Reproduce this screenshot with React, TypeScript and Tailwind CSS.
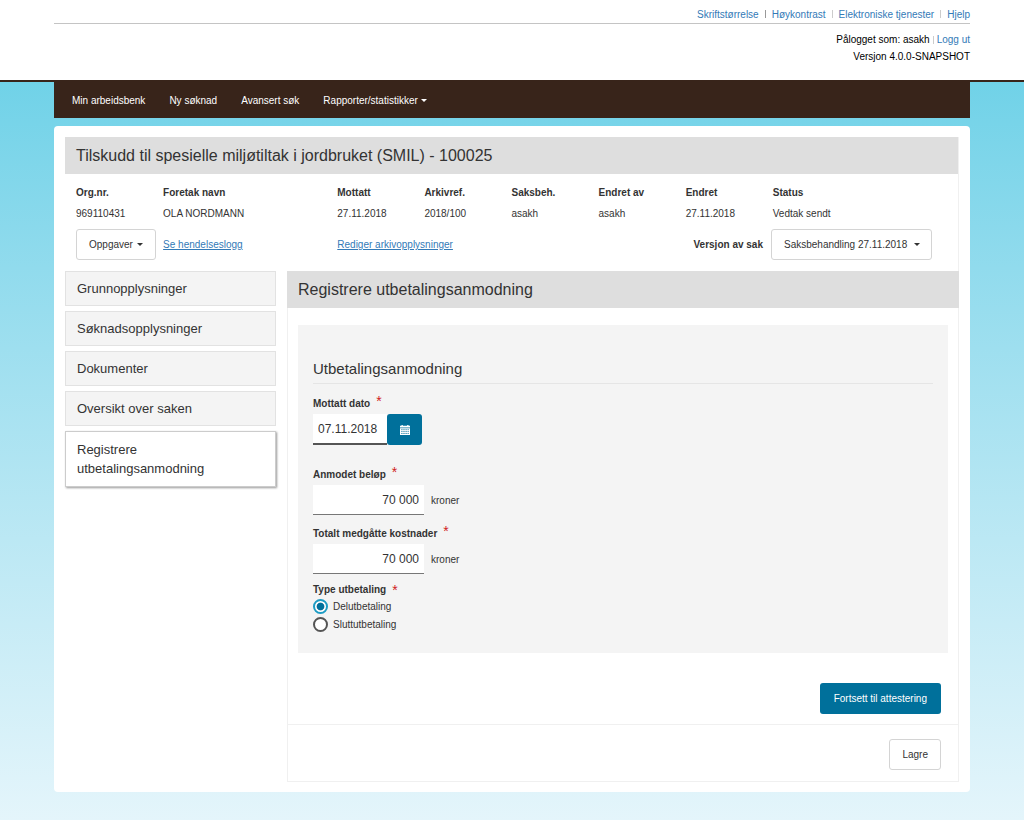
import { useState } from "react";

const navItems = ["Min arbeidsbenk", "Ny søknad", "Avansert søk"];

const sakInfo = [
  { label: "Org.nr.", value: "969110431", span: 1 },
  { label: "Foretak navn", value: "OLA NORDMANN", span: 2 },
  { label: "Mottatt", value: "27.11.2018", span: 1 },
  { label: "Arkivref.", value: "2018/100", span: 1 },
  { label: "Saksbeh.", value: "asakh", span: 1 },
  { label: "Endret av", value: "asakh", span: 1 },
  { label: "Endret", value: "27.11.2018", span: 1 },
  { label: "Status", value: "Vedtak sendt", span: 2 },
];

const menuItems = ["Grunnopplysninger", "Søknadsopplysninger", "Dokumenter", "Oversikt over saken"];

function Caret({ className = "" }: { className?: string }) {
  return (
    <svg viewBox="0 0 6 3" className={`h-[3px] w-[6px] ${className}`} fill="currentColor" aria-hidden="true">
      <path d="M0 0h6L3 3z" />
    </svg>
  );
}

function CalendarIcon() {
  return (
    <svg viewBox="0 0 10 10" className="size-[10px]" aria-hidden="true">
      <path fill="#fff" d="M0 .8h1.5V0h1.3v.8h4.4V0h1.3v.8H10v1.7H0zM0 3.2h10V10H0z" />
      <path
        stroke="#00709b"
        strokeWidth="0.9"
        strokeDasharray="1.2 0.9"
        d="M1.3 4.7h7.4M1.3 6.6h7.4M1.3 8.5h7.4"
      />
    </svg>
  );
}

function Required() {
  return <span className="ml-1.5 self-start text-sm leading-4 font-normal text-[#d0201c]">*</span>;
}

function AmountField({ id, label }: { id: string; label: string }) {
  return (
    <div className="mb-2">
      <label htmlFor={id} className="flex h-[21px] items-center font-bold">
        {label} <Required />
      </label>
      <div className="flex items-center gap-[7px]">
        <input
          id={id}
          defaultValue="70 000"
          className="h-[30px] w-[111px] border-b border-[#777] bg-white px-[5px] text-right text-xs"
        />
        <span>kroner</span>
      </div>
    </div>
  );
}

function Radio({ label, checked, onChange }: { label: string; checked: boolean; onChange: () => void }) {
  return (
    <label className="flex h-[18px] items-center gap-[5px]">
      <input
        type="radio"
        name="type"
        checked={checked}
        onChange={onChange}
        className="size-[15px] appearance-none rounded-full border-2 border-[#555] bg-white checked:border-[#1d9cc4] checked:bg-radial checked:from-[#00709b] checked:from-45% checked:to-white checked:to-55%"
      />
      {label}
    </label>
  );
}

export default function App() {
  const [type, setType] = useState("Delutbetaling");

  return (
    <div className="flex min-h-screen flex-col bg-white font-['Liberation_Sans',Arial,sans-serif] text-[10px] text-[#333]">
      <header className="h-20 px-4">
        <div className="mx-auto max-w-[916px] text-right text-black">
          <nav className="flex h-6 items-center justify-end gap-[6px] border-b border-[#c4c4c4] pt-[5px] text-[#337ab7]">
            <a href="#skrift">Skriftstørrelse</a>
            <span className="h-2 w-px bg-[#999]" />
            <a href="#kontrast">Høykontrast</a>
            <span className="h-2 w-px bg-[#ccc]" />
            <a href="#tjenester">Elektroniske tjenester</a>
            <span className="h-2 w-px bg-[#ccc]" />
            <a href="#hjelp">Hjelp</a>
          </nav>
          <div className="pt-[7px] leading-[17px]">
            <p className="flex items-center justify-end gap-[3px]">
              Pålogget som: asakh <span className="h-2 w-px bg-[#ccc]" />
              <a href="#loggut" className="text-[#337ab7]">Logg ut</a>
            </p>
            <p>Versjon 4.0.0-SNAPSHOT</p>
          </div>
        </div>
      </header>

      <div className="grow border-t-2 border-[#38241a] bg-linear-to-b from-[#70d2e8] to-[#e4f5fb] px-4 pb-7">
        <div className="mx-auto max-w-[916px]">
          <nav className="flex h-9 items-center gap-6 bg-[#38241a] px-[18px] text-white">
            {navItems.map((item) => (
              <a key={item} href="#nav">{item}</a>
            ))}
            <button className="flex items-center gap-[3px]">
              Rapporter/statistikker <Caret />
            </button>
          </nav>

          <main className="mt-2 rounded bg-white p-[11px] pb-[10px]">
            <section className="border-r border-[#f0f0f0]">
              <h1 className="bg-[#dedede] px-[11px] text-base leading-[37px]">
                Tilskudd til spesielle miljøtiltak i jordbruket (SMIL) - 100025
              </h1>
              <div className="px-[11px] pt-2 pb-[11px]">
                <table className="w-full table-fixed text-left leading-[21px]">
                  <thead>
                    <tr>
                      {sakInfo.map((info) => (
                        <th key={info.label} colSpan={info.span} className="p-0">{info.label}</th>
                      ))}
                    </tr>
                  </thead>
                  <tbody>
                    <tr>
                      {sakInfo.map((info) => (
                        <td key={info.label} colSpan={info.span} className="p-0">{info.value}</td>
                      ))}
                    </tr>
                  </tbody>
                </table>
                <div className="mt-[5px] grid grid-cols-10 items-center">
                  <div>
                    <button className="flex h-[31px] items-center gap-1 rounded-[3px] border border-[#d4d4d4] px-3">
                      Oppgaver <Caret />
                    </button>
                  </div>
                  <a href="#logg" className="col-span-2 text-[#337ab7] underline">Se hendelseslogg</a>
                  <a href="#arkiv" className="col-span-3 text-[#337ab7] underline">Rediger arkivopplysninger</a>
                  <div className="col-span-4 flex items-center justify-end gap-2 pr-[15px]">
                    <label htmlFor="versjon" className="font-bold">Versjon av sak</label>
                    <div className="relative">
                      <select
                        id="versjon"
                        className="h-[31px] w-[161px] appearance-none rounded-[3px] border border-[#d4d4d4] bg-white pl-3"
                      >
                        <option>Saksbehandling 27.11.2018</option>
                      </select>
                      <Caret className="pointer-events-none absolute top-[14px] right-3" />
                    </div>
                  </div>
                </div>
              </div>
            </section>

            <div className="flex items-start gap-[11px]">
              <nav className="flex w-[211px] shrink-0 flex-col gap-[5px] text-[13px] leading-[19px]">
                {menuItems.map((item) => (
                  <a key={item} href="#meny" className="border border-[#e2e2e2] bg-[#f4f4f4] px-[11px] py-[7px]">
                    {item}
                  </a>
                ))}
                <a href="#meny" className="border border-[#ccc] bg-white px-[11px] py-2 shadow-[1px_1px_2px_#999]">
                  Registrere utbetalingsanmodning
                </a>
              </nav>

              <section className="grow">
                <h2 className="bg-[#dedede] px-[11px] text-base leading-[37px]">Registrere utbetalingsanmodning</h2>
                <div className="border border-t-0 border-[#f0f0f0] px-[10px] pt-[17px] pb-[10px]">
                  <form className="bg-[#f4f4f4] px-[15px] pt-[33px] pb-5">
                    <h3 className="mb-[9px] border-b border-[#e5e5e5] pb-1 text-[15px] leading-[21px]">
                      Utbetalingsanmodning
                    </h3>
                    <div className="mb-[19px]">
                      <label htmlFor="dato" className="flex h-[21px] items-center font-bold">
                        Mottatt dato <Required />
                      </label>
                      <div className="flex">
                        <input
                          id="dato"
                          defaultValue="07.11.2018"
                          className="h-[31px] w-[74px] border-b-2 border-[#555] bg-white px-[5px] text-xs"
                        />
                        <button
                          type="button"
                          aria-label="Velg dato"
                          className="grid h-[31px] w-[35px] place-items-center rounded-[3px] bg-[#00709b]"
                        >
                          <CalendarIcon />
                        </button>
                      </div>
                    </div>
                    <AmountField id="belop" label="Anmodet beløp" />
                    <AmountField id="kostnader" label="Totalt medgåtte kostnader" />
                    <fieldset>
                      <legend className="flex h-[15px] items-end font-bold">
                        Type utbetaling <Required />
                      </legend>
                      {["Delutbetaling", "Sluttutbetaling"].map((item) => (
                        <Radio key={item} label={item} checked={type === item} onChange={() => setType(item)} />
                      ))}
                    </fieldset>
                  </form>
                  <div className="mt-[30px] flex justify-end pr-[7px]">
                    <button className="h-[31px] rounded-[3px] bg-[#00709b] px-[14px] text-white">
                      Fortsett til attestering
                    </button>
                  </div>
                </div>
                <div className="flex justify-end border border-t-0 border-[#f0f0f0] pt-[14px] pr-[17px] pb-[11px]">
                  <button className="h-[31px] rounded-[3px] border border-[#d4d4d4] px-3">Lagre</button>
                </div>
              </section>
            </div>
          </main>
        </div>
      </div>
    </div>
  );
}
